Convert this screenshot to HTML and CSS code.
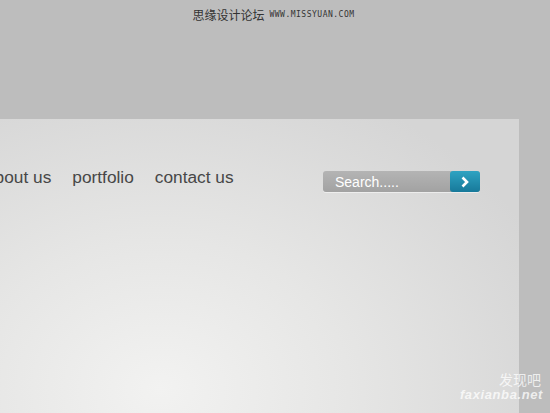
FILE: index.html
```html
<!DOCTYPE html>
<html lang="zh">
<head>
    <meta charset="UTF-8">
    <title>portfolio</title>
    <link rel="stylesheet" href="styles.css">
</head>
<body>
    <div class="top">
        <span class="site-cn">思缘设计论坛</span>
        <span class="site-url">WWW.MISSYUAN.COM</span>
    </div>

    <div class="panel">
        <div class="header">
            <ul class="nav">
                <li>about us</li>
                <li>portfolio</li>
                <li>contact us</li>
            </ul>
            <form class="search">
                <input type="text" value="Search.....">
                <button type="button">
                    <svg width="12" height="12" viewBox="0 0 12 12">
                        <path d="M3.5 1.5 L8 6 L3.5 10.5" fill="none" stroke="#fff" stroke-width="2.6" stroke-linejoin="miter"/>
                    </svg>
                </button>
            </form>
        </div>
    </div>

    <div class="mark">
        <div class="mark-cn">发现吧</div>
        <div class="mark-url">faxianba.net</div>
    </div>
</body>
</html>
```

FILE: styles.css
```css
html, body {
    margin: 0;
    height: 100%;
    overflow: hidden;
}

body {
    position: relative;
    background-color: #bdbdbd;
    font-family: Arial, "Liberation Sans", sans-serif;
}

.top {
    height: 119px;
    display: flex;
    justify-content: center;
    align-items: flex-start;
    gap: 5px;
    padding-top: 7px;
    padding-right: 3px;
    box-sizing: border-box;
}

.site-cn {
    font-family: "Noto Sans CJK SC", sans-serif;
    font-size: 12px;
    line-height: 16px;
    color: #333;
}

.site-url {
    font-family: "DejaVu Sans Mono", monospace;
    font-size: 8px;
    line-height: 16px;
    color: #333;
    letter-spacing: 0.5px;
}

.panel {
    width: 519px;
    height: 294px;
    background: radial-gradient(ellipse 420px 330px at 160px 270px, #f2f2f1 0%, #e6e6e5 45%, #d5d5d5 100%);
    overflow: hidden;
}

.header {
    display: flex;
    justify-content: space-between;
    align-items: flex-start;
    padding: 47px 39px 0 0;
}

.nav {
    display: flex;
    gap: 21px;
    list-style: none;
    margin: 0 0 0 -15px;
    padding: 0;
    font-size: 17.3px;
    line-height: 22px;
    color: #474747;
}

.search {
    display: flex;
    align-items: center;
    width: 157px;
    height: 21px;
    margin-top: 5px;
    background: linear-gradient(#b4b4b4, #a2a2a2);
    border-radius: 3px;
    box-shadow: 0 1px 0 rgba(255, 255, 255, 0.5);
}

.search input {
    flex: 1;
    min-width: 0;
    border: none;
    background: transparent;
    color: #fff;
    font-family: Arial, "Liberation Sans", sans-serif;
    font-size: 14px;
    padding: 0 0 0 12px;
    outline: none;
}

.search button {
    width: 30px;
    height: 21px;
    border: none;
    border-radius: 3px;
    padding: 0;
    display: flex;
    align-items: center;
    justify-content: center;
    background: linear-gradient(#2fa3c2, #17799a);
}

.mark {
    position: absolute;
    right: 7px;
    bottom: 11px;
    display: flex;
    flex-direction: column;
    align-items: flex-end;
    gap: 1px;
    color: rgba(255, 255, 255, 0.75);
}

.mark-cn {
    font-family: "Noto Sans CJK SC", sans-serif;
    font-size: 14px;
    line-height: 16px;
    margin-right: 2px;
}

.mark-url {
    font-size: 13px;
    font-weight: bold;
    font-style: italic;
    letter-spacing: 0.6px;
    line-height: 14px;
}
```
